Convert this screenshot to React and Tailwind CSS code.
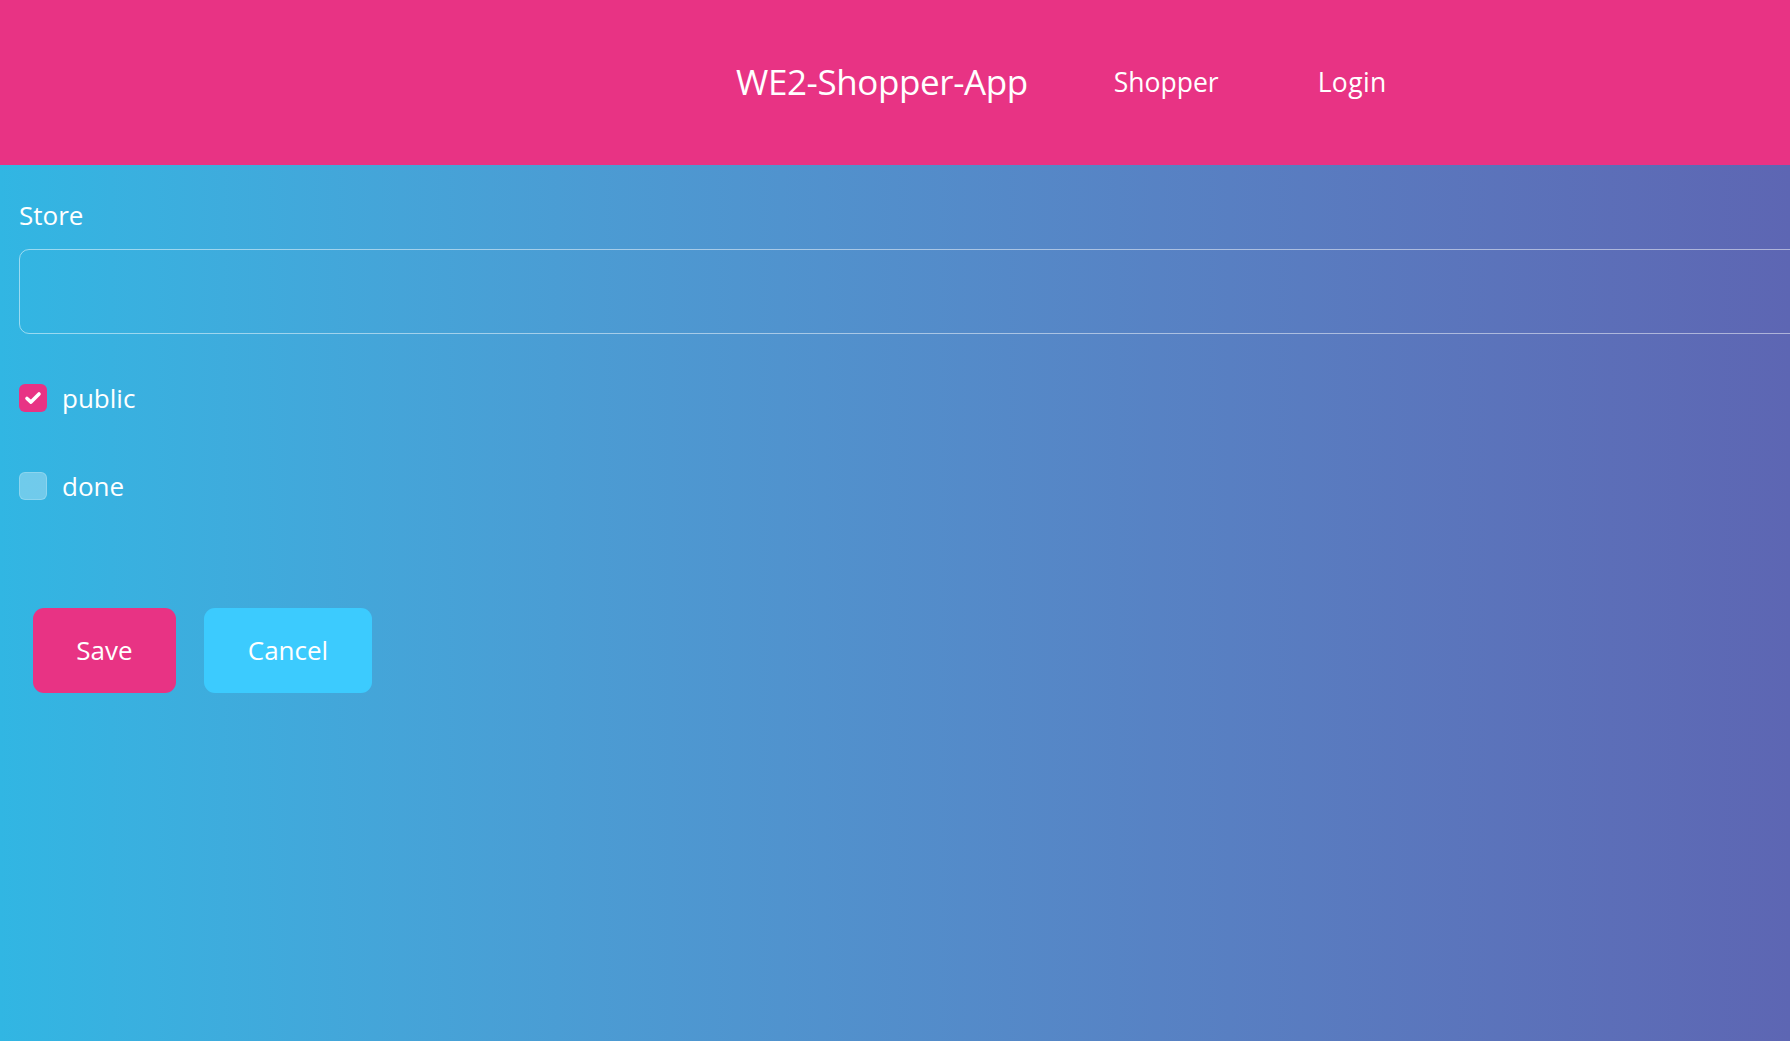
import React, { useState } from 'react'

// Store edit form page of the shopper app
export default function App() {
  const [store, setStore] = useState('')
  const [isPublic, setIsPublic] = useState(true)
  const [done, setDone] = useState(false)

  return (
    <div className="min-h-screen bg-gradient-to-r from-[#31b6e3] to-[#5d66b3] text-white font-['Open_Sans',sans-serif]">
      {/* Header */}
      <header className="h-[165px] bg-[#e83384] flex items-center">
        <nav className="flex items-center ml-[736px]">
          <span className="text-[35px] tracking-[-0.4px]">WE2-Shopper-App</span>
          <a className="ml-[86px] text-[26.5px]">Shopper</a>
          <a className="ml-[99px] text-[26.5px] tracking-[0.4px]">Login</a>
        </nav>
      </header>

      {/* Form */}
      <main className="px-[19px] pt-[32px]">
        <label className="block text-[26px] leading-[36px]">Store</label>
        <input
          value={store}
          onChange={e => setStore(e.target.value)}
          className="mt-[16px] block w-[1800px] h-[85px] rounded-[10px] border border-white/50 bg-transparent px-4 text-[25px] outline-none"
        />

        <label className="mt-[50px] flex items-center gap-[15px] cursor-pointer">
          <span
            onClick={() => setIsPublic(!isPublic)}
            className={`w-[28px] h-[28px] rounded-[6px] flex items-center justify-center ${isPublic ? 'bg-[#e83384]' : 'bg-white/30 border border-white/20'}`}
          >
            {isPublic && (
              <svg width="20" height="20" viewBox="0 0 20 20">
                <path d="M4 10.5l4 3.6L16 6" fill="none" stroke="white" strokeWidth="3.6" strokeLinecap="round" strokeLinejoin="round" />
              </svg>
            )}
          </span>
          <span className="text-[26px] leading-[28px]">public</span>
        </label>

        <label className="mt-[60px] flex items-center gap-[15px] cursor-pointer">
          <span
            onClick={() => setDone(!done)}
            className={`w-[28px] h-[28px] rounded-[6px] flex items-center justify-center ${done ? 'bg-[#e83384]' : 'bg-white/30 border border-white/20'}`}
          />
          <span className="text-[26px] leading-[28px]">done</span>
        </label>

        <div className="mt-[108px] ml-[14px] flex gap-[28px]">
          <button className="w-[143px] h-[85px] rounded-[11px] bg-[#e83384] text-[26px]">Save</button>
          <button className="w-[168px] h-[85px] rounded-[11px] bg-[#3ccbfe] text-[26px]">Cancel</button>
        </div>
      </main>
    </div>
  )
}
